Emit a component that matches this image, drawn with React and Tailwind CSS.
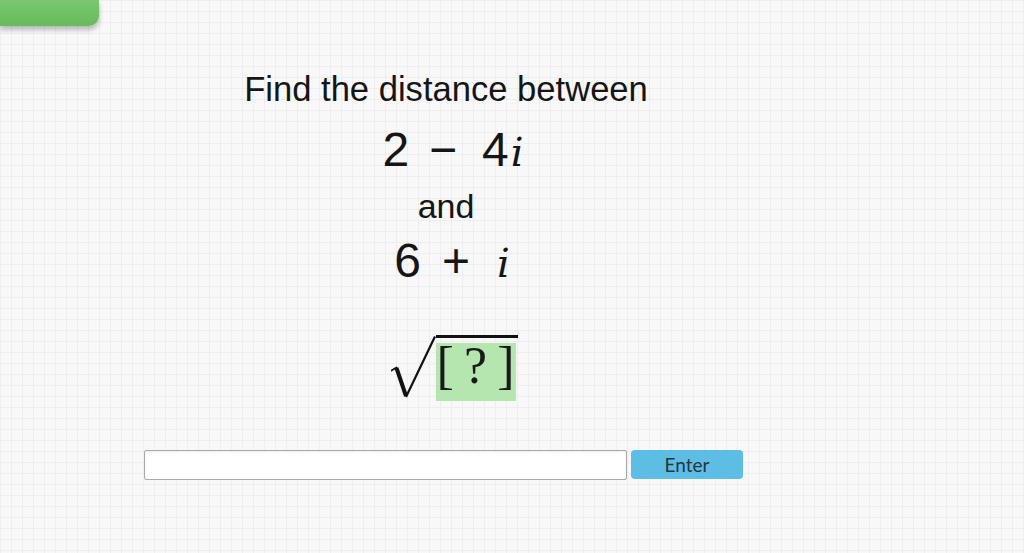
export default function App() {
  return (
    <div className="relative w-[1024px] h-[553px] overflow-hidden bg-[#f8f8f9] bg-[linear-gradient(to_right,#eeeef1_1px,transparent_1px),linear-gradient(to_bottom,#eeeef1_1px,transparent_1px)] bg-[size:11px_11px] font-['Liberation_Sans',Arial,sans-serif] text-[#151515]">
      <div className="w-[99px] h-[26px] rounded-br-[10px] bg-[linear-gradient(to_bottom,#7cc76f,#66bb5a)] shadow-[0_4px_5px_rgba(0,0,0,0.25)]" />
      <div className="w-[892px] flex flex-col items-center">
        <div className="mt-[46px] text-[34.6px] leading-[34px]">Find the distance between</div>
        <div className="mt-[20px] pl-[14px] flex items-baseline text-[48px] leading-none">
          <span>2</span>
          <span className="ml-[20px]">−</span>
          <span className="ml-[25px]">4</span>
          <span className="ml-[2px] font-['DejaVu_Serif',serif] italic font-light text-[40px]">i</span>
        </div>
        <div className="mt-[15px] text-[34px] leading-none">and</div>
        <div className="mt-[14px] pl-[12px] flex items-baseline text-[48px] leading-none">
          <span>6</span>
          <span className="ml-[21px]">+</span>
          <span className="ml-[27px] font-['DejaVu_Serif',serif] italic font-light text-[40px]">i</span>
        </div>
        <div className="mt-[50px] pl-[16px] flex items-start">
          <svg width="45" height="66" viewBox="0 0 45 66" className="block">
            <path d="M0.5 35.5 L5.5 32.5" stroke="#111" strokeWidth="1.8" fill="none" strokeLinecap="round" />
            <path d="M5.5 33 L15 61" stroke="#111" strokeWidth="4" fill="none" strokeLinecap="butt" />
            <path d="M15 62 L44 1.6" stroke="#111" strokeWidth="2.2" fill="none" strokeLinecap="butt" />
          </svg>
          <div className="border-t-[3px] border-[#111] w-[82px] pt-[5px]">
            <div className="w-[80px] h-[58px] bg-[#b5e6b0] flex justify-between px-[1px] font-['Liberation_Serif','Times_New_Roman',serif] text-[52px] leading-[45px] text-[#1a1a1a]">
              <span>[</span>
              <span>?</span>
              <span>]</span>
            </div>
          </div>
        </div>
        <div className="mt-[49px] flex items-start gap-[4px] pr-[5px]">
          <div className="w-[483px] h-[30px] bg-white border border-[#a9a9a9] rounded-[2px] shadow-[inset_0_1px_2px_rgba(0,0,0,0.08)]" />
          <button className="w-[112px] h-[29px] bg-[#5ebde4] rounded-[4px] font-['Lato',sans-serif] font-normal text-[19px] leading-[29px] text-[#25363e]">
            Enter
          </button>
        </div>
      </div>
    </div>
  );
}
